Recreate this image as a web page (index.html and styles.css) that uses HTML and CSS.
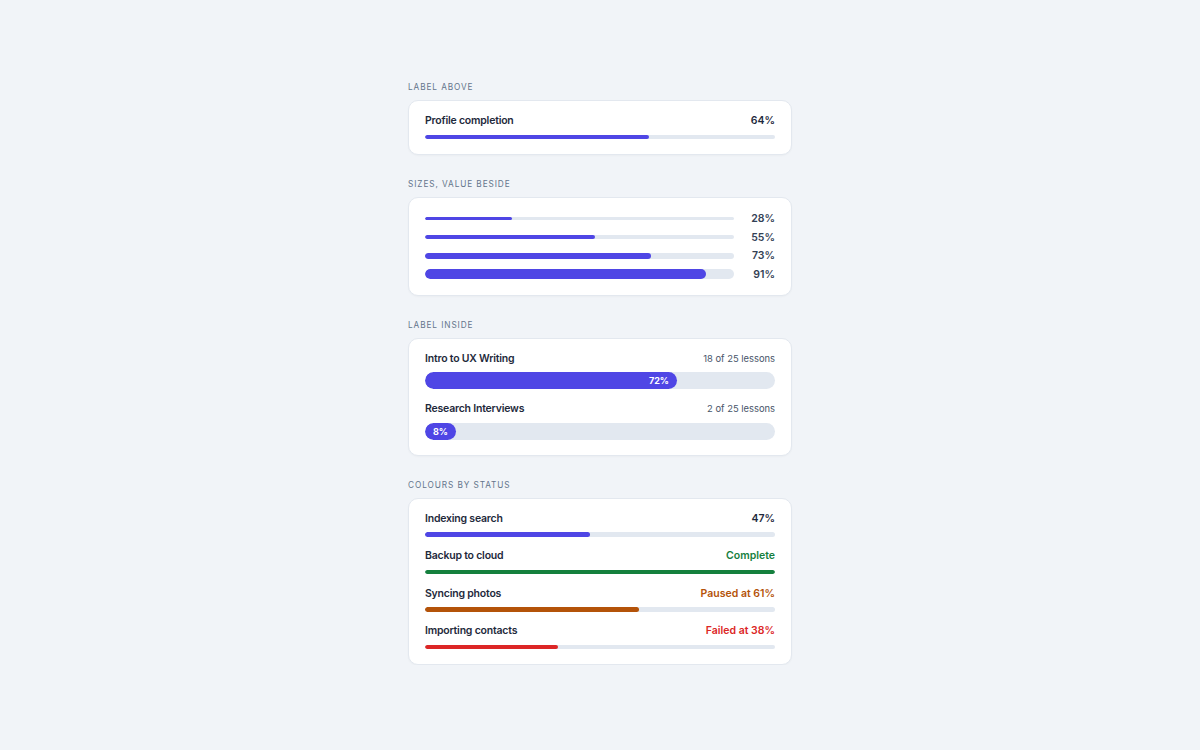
FILE: index.html
```html
<!DOCTYPE html>
<html>
  <head>
    <meta name="viewport" content="width=device-width, initial-scale=1" />
    <link rel="stylesheet" href="styles.css">
  </head>
  <body>
    <main class="stack">
      <section class="group">
        <h2 class="group-title">Label above</h2>
        <div class="card">
          <div class="meter">
            <div class="meter-head">
              <span class="meter-name">Profile completion</span>
              <span class="meter-value">64%</span>
            </div>
            <div class="track"><div class="fill" style="width: 64%"></div></div>
          </div>
        </div>
      </section>

      <section class="group">
        <h2 class="group-title">Sizes, value beside</h2>
        <div class="card sizes">
          <div class="sized-row">
            <div class="track xs"><div class="fill" style="width: 28%"></div></div>
            <span class="meter-value side">28%</span>
          </div>
          <div class="sized-row">
            <div class="track sm"><div class="fill" style="width: 55%"></div></div>
            <span class="meter-value side">55%</span>
          </div>
          <div class="sized-row">
            <div class="track md"><div class="fill" style="width: 73%"></div></div>
            <span class="meter-value side">73%</span>
          </div>
          <div class="sized-row">
            <div class="track lg"><div class="fill" style="width: 91%"></div></div>
            <span class="meter-value side">91%</span>
          </div>
        </div>
      </section>

      <section class="group">
        <h2 class="group-title">Label inside</h2>
        <div class="card list">
          <div class="meter">
            <div class="meter-head">
              <span class="meter-name">Intro to UX Writing</span>
              <span class="meter-note">18 of 25 lessons</span>
            </div>
            <div class="track xl"><div class="fill labelled" style="width: 72%">72%</div></div>
          </div>
          <div class="meter">
            <div class="meter-head">
              <span class="meter-name">Research Interviews</span>
              <span class="meter-note">2 of 25 lessons</span>
            </div>
            <div class="track xl"><div class="fill labelled" style="width: 8%">8%</div></div>
          </div>
        </div>
      </section>

      <section class="group">
        <h2 class="group-title">Colours by status</h2>
        <div class="card list status">
          <div class="meter">
            <div class="meter-head">
              <span class="meter-name">Indexing search</span>
              <span class="meter-value">47%</span>
            </div>
            <div class="track"><div class="fill" style="width: 47%"></div></div>
          </div>
          <div class="meter done">
            <div class="meter-head">
              <span class="meter-name">Backup to cloud</span>
              <span class="meter-value">Complete</span>
            </div>
            <div class="track"><div class="fill" style="width: 100%"></div></div>
          </div>
          <div class="meter paused">
            <div class="meter-head">
              <span class="meter-name">Syncing photos</span>
              <span class="meter-value">Paused at 61%</span>
            </div>
            <div class="track"><div class="fill" style="width: 61%"></div></div>
          </div>
          <div class="meter failed">
            <div class="meter-head">
              <span class="meter-name">Importing contacts</span>
              <span class="meter-value">Failed at 38%</span>
            </div>
            <div class="track"><div class="fill" style="width: 38%"></div></div>
          </div>
        </div>
      </section>
    </main>
  </body>
</html>
```

FILE: styles.css
```css
/* Page */
body {
  margin: 0;
  background: #f1f4f8;
  font-family: Inter, "Noto Sans", sans-serif;
  color: #1e293b;
}

.stack {
  width: 384px;
  margin: 0 auto;
  padding-top: 81px;
  display: flex;
  flex-direction: column;
  gap: 23px;
}

/* Section heading above each card */
.group-title {
  margin: 0 0 7px;
  font-size: 8.25px;
  line-height: 12px;
  font-weight: 400;
  letter-spacing: 0.11em;
  text-transform: uppercase;
  color: #64748b;
}

.card {
  background: #fff;
  border: 1px solid #e3e8ef;
  border-radius: 10px;
  padding: 15px 16px;
  box-shadow: 0 1px 2px rgba(15, 23, 42, 0.03);
}

/* Label row + bar */
.meter-head {
  display: flex;
  justify-content: space-between;
  align-items: baseline;
  margin-bottom: 8px;
  line-height: 10.5px;
}

.meter-name {
  font-size: 10.5px;
  font-weight: 600;
  letter-spacing: -0.02em;
  color: #1e293b;
}

.meter-value {
  font-size: 10.5px;
  font-weight: 600;
  color: #1e293b;
}

.meter-note {
  font-size: 9.4px;
  color: #475569;
}

.track {
  height: 4.5px;
  background: #e2e8f0;
  border-radius: 999px;
  overflow: hidden;
}

.fill {
  height: 100%;
  background: #4f46e5;
  border-radius: 999px;
}

/* Bars of different thickness with the value on the right */
.sizes {
  display: flex;
  flex-direction: column;
  gap: 7.5px;
}

.sized-row {
  display: flex;
  align-items: center;
  gap: 9px;
  height: 11px;
}

.sized-row .track {
  flex: 1;
}

.meter-value.side {
  width: 32px;
  text-align: right;
  line-height: 11px;
  color: #334155;
}

.track.xs { height: 2.5px; }
.track.sm { height: 4.5px; }
.track.md { height: 6px; }
.track.lg { height: 10px; }

/* Thick bar with the percentage printed on the fill */
.track.xl {
  height: 17px;
}

.fill.labelled {
  box-sizing: border-box;
  min-width: max-content;
  padding: 0 8px;
  display: flex;
  align-items: center;
  justify-content: flex-end;
  font-size: 9px;
  font-weight: 700;
  color: #fff;
}

/* Stacked meters */
.list {
  display: flex;
  flex-direction: column;
  gap: 15px;
}

.status {
  gap: 14.5px;
}

.done .fill { background: #15803d; }
.done .meter-value { color: #15803d; }

.paused .fill { background: #b45309; }
.paused .meter-value { color: #b45309; }

.failed .fill { background: #dc2626; }
.failed .meter-value { color: #dc2626; }
```
